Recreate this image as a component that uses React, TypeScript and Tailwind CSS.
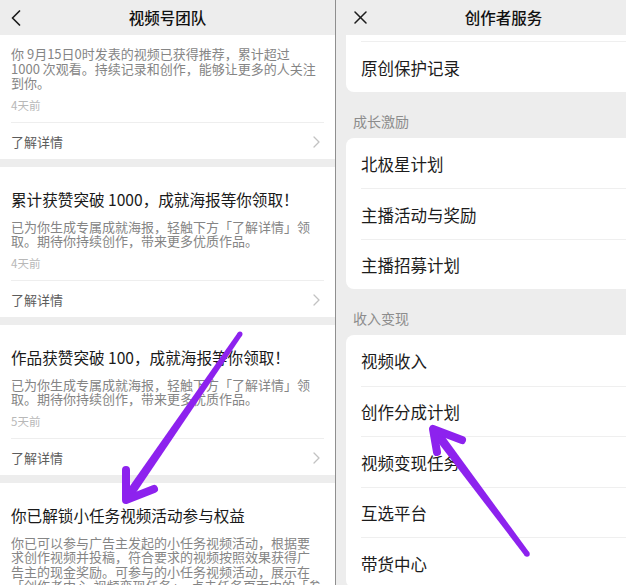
import React from "react";

function taper(x1: number, y1: number, w1: number, x2: number, y2: number, w2: number) {
  const dx = x2 - x1;
  const dy = y2 - y1;
  const len = Math.sqrt(dx * dx + dy * dy);
  const nx = -dy / len;
  const ny = dx / len;
  const pts = [
    [x1 + (nx * w1) / 2, y1 + (ny * w1) / 2],
    [x2 + (nx * w2) / 2, y2 + (ny * w2) / 2],
    [x2 - (nx * w2) / 2, y2 - (ny * w2) / 2],
    [x1 - (nx * w1) / 2, y1 - (ny * w1) / 2],
  ];
  return pts.map((p) => p.join(",")).join(" ");
}

function ChevronRight() {
  return (
    <svg width="7" height="12" viewBox="0 0 7 12" fill="none">
      <polyline points="1,1 6,6 1,11" stroke="#c2c2c2" strokeWidth="1.3" strokeLinecap="round" strokeLinejoin="round" />
    </svg>
  );
}

function LinkRow() {
  return (
    <div className="mt-[9px] border-t border-[#eeeeee]">
      <div className="flex h-[36px] items-center justify-between pt-[2px] pr-[4px]">
        <span className="text-[13px] leading-[18px] text-[#5c5c5c]">了解详情</span>
        <ChevronRight />
      </div>
    </div>
  );
}

function Body({ lines }: { lines: string[] }) {
  return (
    <div className="text-[13px] leading-[14.5px] text-[#858585]">
      {lines.map((l, i) => (
        <div key={i} className="whitespace-nowrap">
          {l}
        </div>
      ))}
    </div>
  );
}

function Time({ t }: { t: string }) {
  return <div className="mt-[6px] text-[11.5px] leading-[16px] text-[#b8b8b8]">{t}</div>;
}

function Card({ title, lines, time }: { title: string; lines: string[]; time?: string }) {
  return (
    <div className="bg-white px-[11px] pt-[22px]">
      <div className="whitespace-nowrap text-[15.6px] leading-[20px] text-[#1a1a1a]">{title}</div>
      <div className="mt-[11px]">
        <Body lines={lines} />
      </div>
      {time && (
        <>
          <Time t={time} />
          <LinkRow />
        </>
      )}
    </div>
  );
}

function Row({ label, border }: { label: string; border: boolean }) {
  return (
    <div className="pl-[15px]">
      <div
        className={
          border
            ? "flex h-[50.5px] items-center border-t border-[#efefef] pt-[3px] text-[16.5px] text-[#1c1c1c]"
            : "flex h-[50.5px] items-center pt-[3px] text-[16.5px] text-[#1c1c1c]"
        }
      >
        <span className="whitespace-nowrap">{label}</span>
      </div>
    </div>
  );
}

function Section({ label }: { label: string }) {
  return <div className="pt-[19px] mb-[7px] pl-[7px] text-[14px] leading-[20px] text-[#8c8c8c]">{label}</div>;
}

export default function App() {
  const purple = "#8d22ee";
  return (
    <div className="relative flex h-[585px] w-[626px] overflow-hidden bg-[#ededed] font-['Noto_Sans_CJK_SC','Noto_Sans',sans-serif]">
      {/* Left panel */}
      <div className="flex h-full w-[335px] shrink-0 flex-col overflow-hidden bg-[#ededed]">
        <div className="grid h-[35px] shrink-0 grid-cols-[1fr_auto_1fr] items-center">
          <div className="pl-[11px]">
            <svg width="10" height="16" viewBox="0 0 10 16" fill="none">
              <polyline points="8.5,1 1.5,8 8.5,15" stroke="#1c1c1c" strokeWidth="1.7" strokeLinecap="round" strokeLinejoin="round" />
            </svg>
          </div>
          <div className="text-[15.5px] font-medium text-[#111111]">视频号团队</div>
          <div />
        </div>
        <div className="flex flex-col gap-[8px]">
          <div className="bg-white px-[11px] pt-[12px]">
            <Body
              lines={[
                "你 9月15日0时发表的视频已获得推荐，累计超过",
                "1000 次观看。持续记录和创作，能够让更多的人关注",
                "到你。",
              ]}
            />
            <Time t="4天前" />
            <LinkRow />
          </div>
          <Card
            title="累计获赞突破 1000，成就海报等你领取！"
            lines={["已为你生成专属成就海报，轻触下方「了解详情」领", "取。期待你持续创作，带来更多优质作品。"]}
            time="4天前"
          />
          <Card
            title="作品获赞突破 100，成就海报等你领取！"
            lines={["已为你生成专属成就海报，轻触下方「了解详情」领", "取。期待你持续创作，带来更多优质作品。"]}
            time="5天前"
          />
          <Card
            title="你已解锁小任务视频活动参与权益"
            lines={[
              "你已可以参与广告主发起的小任务视频活动，根据要",
              "求创作视频并投稿，符合要求的视频按照效果获得广",
              "告主的现金奖励。可参与的小任务视频活动，展示在",
              "「创作者中心-视频变现任务」，点击任务页面中的「参",
            ]}
          />
        </div>
      </div>

      <div className="h-full w-[1px] shrink-0 bg-[#8f8f8f]" />

      {/* Right panel */}
      <div className="flex h-full w-[335px] shrink-0 flex-col bg-[#ededed]">
        <div className="grid h-[35px] shrink-0 grid-cols-[1fr_auto_1fr] items-center">
          <div className="pl-[18px]">
            <svg width="13" height="13" viewBox="0 0 13 13" fill="none">
              <line x1="1" y1="1" x2="12" y2="12" stroke="#1c1c1c" strokeWidth="1.5" strokeLinecap="round" />
              <line x1="12" y1="1" x2="1" y2="12" stroke="#1c1c1c" strokeWidth="1.5" strokeLinecap="round" />
            </svg>
          </div>
          <div className="text-[15.5px] font-medium text-[#111111]">创作者服务</div>
          <div />
        </div>
        <div className="flex flex-col px-[10px]">
          <div className="rounded-b-[8px] bg-white">
            <div className="h-[6px]" />
            <Row label="原创保护记录" border />
          </div>
          <Section label="成长激励" />
          <div className="rounded-[8px] bg-white">
            <Row label="北极星计划" border={false} />
            <Row label="主播活动与奖励" border />
            <Row label="主播招募计划" border />
          </div>
          <Section label="收入变现" />
          <div className="rounded-[8px] bg-white">
            <Row label="视频收入" border={false} />
            <Row label="创作分成计划" border />
            <Row label="视频变现任务" border />
            <Row label="互选平台" border />
            <Row label="带货中心" border />
          </div>
        </div>
      </div>

      {/* Purple annotation arrows */}
      <svg className="pointer-events-none absolute inset-0" width="626" height="585" viewBox="0 0 626 585" fill="none">
        <polygon points={taper(240, 334, 5, 127, 498, 9)} fill={purple} />
        <circle cx="240" cy="334" r="2.5" fill={purple} />
        <polyline points="126,470 126,500 154,489" stroke={purple} strokeWidth="8" strokeLinecap="round" strokeLinejoin="round" />
        <polygon points={taper(527, 554, 5.5, 435, 431, 9)} fill={purple} />
        <circle cx="527" cy="554" r="2.75" fill={purple} />
        <polyline points="462,440 433,429 437,452" stroke={purple} strokeWidth="8" strokeLinecap="round" strokeLinejoin="round" />
      </svg>
    </div>
  );
}
